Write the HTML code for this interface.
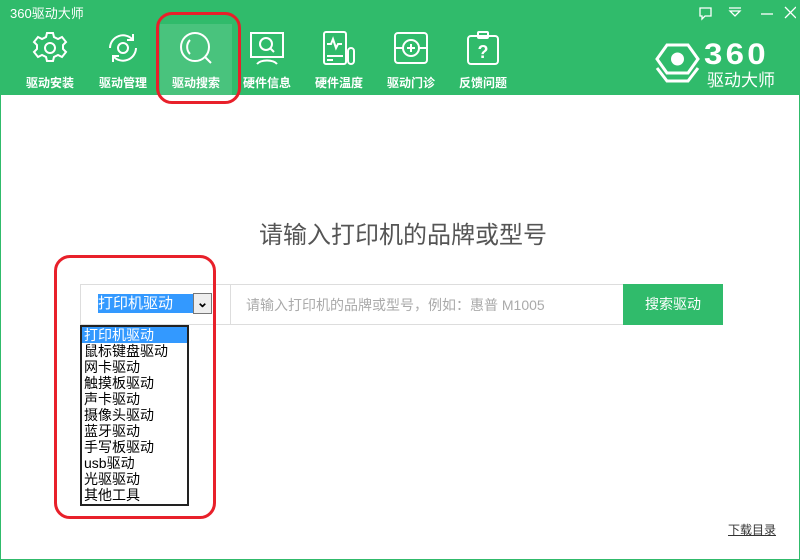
<!DOCTYPE html>
<html><head><meta charset="utf-8"><style>
*{margin:0;padding:0;box-sizing:border-box}
body{width:800px;height:560px;overflow:hidden;background:#fff;font-family:"Liberation Sans","Noto Sans CJK SC",sans-serif;position:relative}
.hdr{position:absolute;left:0;top:0;width:800px;height:95px;background:#30bb6b}
.ttl{position:absolute;left:10px;top:3px;color:#fff;font-size:13px}
.tab{position:absolute;top:24px;width:72px;height:71px;color:#fff;font-size:12px;text-align:center;font-weight:bold}
.tab svg{display:block;margin:6px auto 0}
.tab span{position:absolute;left:0;right:0;top:50px}
.on{background:rgba(255,255,255,.12)}
.abs{position:absolute}
.red{position:absolute;border:3.5px solid #e8202a;border-radius:16px}
.opt{height:16px;line-height:16px;font-size:14px;color:#000;padding-left:2px;white-space:nowrap}
</style></head><body>
<div class="hdr">
<div class="ttl">360驱动大师</div>
<svg class="abs" style="left:696px;top:5px" width="100" height="16" fill="none" stroke="#fff" stroke-width="1.3">
<path d="M4 3h11v8H9l-3 3v-3H4z"/><path d="M33 3h12M34 6h10l-5 5z"/><path d="M65 9h12"/><path d="M89 2l11 11M100 2L89 13"/></svg>
<div class="tab" style="left:14px"><svg width="36" height="36" viewBox="0 0 36 36" fill="none" stroke="#fff" stroke-width="2"><path d="M15 3h6l1 4 4 2 4-2 4 5-3 3v4l3 3-4 5-4-2-4 2-1 4h-6l-1-4-4-2-4 2-4-5 3-3v-4l-3-3 4-5 4 2 4-2z"/><circle cx="18" cy="18" r="5"/></svg><span>驱动安装</span></div>
<div class="tab" style="left:87px"><svg width="36" height="36" viewBox="0 0 36 36" fill="none" stroke="#fff" stroke-width="2"><path d="M5 18a13 13 0 0 1 23-8M31 18a13 13 0 0 1-23 8"/><path d="M28 4v6h-6M8 32v-6h6"/><circle cx="18" cy="18" r="5"/></svg><span>驱动管理</span></div>
<div class="tab on" style="left:160px"><svg width="36" height="36" viewBox="0 0 36 36" fill="none" stroke="#fff" stroke-width="2"><circle cx="17" cy="17" r="14"/><path d="M12 10a10 10 0 0 0 0 14M27 27l6 6"/></svg><span>驱动搜索</span></div>
<div class="tab" style="left:231px"><svg width="36" height="36" viewBox="0 0 36 36" fill="none" stroke="#fff" stroke-width="2"><rect x="2" y="3" width="32" height="24"/><circle cx="17" cy="14" r="6"/><path d="M21 18l4 4M8 34a11 6 0 0 1 20 0"/></svg><span>硬件信息</span></div>
<div class="tab" style="left:303px"><svg width="36" height="36" viewBox="0 0 36 36" fill="none" stroke="#fff" stroke-width="2"><rect x="3" y="2" width="22" height="32" rx="2"/><path d="M6 14h4l2-5 3 9 2-4h4M6 26h16M6 30h6"/><rect x="27" y="18" width="6" height="16" rx="3"/></svg><span>硬件温度</span></div>
<div class="tab" style="left:375px"><svg width="36" height="36" viewBox="0 0 36 36" fill="none" stroke="#fff" stroke-width="2"><rect x="2" y="3" width="32" height="30" rx="3"/><circle cx="18" cy="18" r="8"/><path d="M18 14v8M14 18h8M2 18h8M26 18h8"/></svg><span>驱动门诊</span></div>
<div class="tab" style="left:447px"><svg width="36" height="36" viewBox="0 0 36 36" fill="none" stroke="#fff" stroke-width="2"><rect x="3" y="6" width="30" height="28" rx="3"/><rect x="13" y="2" width="10" height="6" rx="1"/><text x="18" y="28" fill="#fff" stroke="none" font-size="18" text-anchor="middle" font-family="Liberation Sans">?</text></svg><span>反馈问题</span></div>
<svg class="abs" style="left:655px;top:42px" width="45" height="42" viewBox="0 0 45 42" fill="none" stroke="#fff" stroke-width="3"><path d="M12 3h21l10 14-10 14H12L2 17z"/><path d="M2 26l10 13h21l10-13"/><circle cx="22.5" cy="17" r="5" fill="#fff"/></svg>
<div class="abs" style="left:704px;top:38px;color:#fff;font-size:30px;font-weight:bold;letter-spacing:3px;transform:scaleX(1.1);transform-origin:left">360</div>
<div class="abs" style="left:707px;top:66px;color:#fff;font-size:17px">驱动大师</div>
</div>
<div class="abs" style="left:0;top:95px;width:800px;height:465px;border:1px solid #30bb6b;border-top:none"></div>
<div class="abs" style="left:0;top:215px;width:806px;text-align:center;font-size:24px;color:#555">请输入打印机的品牌或型号</div>
<div class="abs" style="left:80px;top:284px;width:544px;height:41px;border:1px solid #ddd"></div>
<div class="abs" style="left:230px;top:284px;width:1px;height:41px;background:#ddd"></div>
<div class="abs" style="left:98px;top:294px;width:95px;height:19px;background:#3399ff;color:#fff;font-size:15px;line-height:19px">打印机驱动</div>
<div class="abs" style="left:193px;top:293px;width:19px;height:21px;border:1px solid #777;background:#eee;font-size:14px;text-align:center;line-height:16px;font-weight:bold">&#8964;</div>
<div class="abs" style="left:246px;top:295px;font-size:14px;color:#aaa">请输入打印机的品牌或型号，例如：惠普 M1005</div>
<div class="abs" style="left:623px;top:284px;width:100px;height:41px;background:#30bb6b;color:#fff;font-size:14px;text-align:center;line-height:41px">搜索驱动</div>
<div class="abs" style="left:80px;top:325px;width:109px;height:181px;border:2px solid #222;background:#fff;padding-top:0">
<div class="opt" style="background:#3399ff;color:#fff">打印机驱动</div>
<div class="opt">鼠标键盘驱动</div><div class="opt">网卡驱动</div><div class="opt">触摸板驱动</div><div class="opt">声卡驱动</div><div class="opt">摄像头驱动</div><div class="opt">蓝牙驱动</div><div class="opt">手写板驱动</div><div class="opt">usb驱动</div><div class="opt">光驱驱动</div><div class="opt">其他工具</div>
</div>
<div class="abs" style="left:728px;top:521px;font-size:12px;color:#333;text-decoration:underline">下载目录</div>
<div class="red" style="left:156px;top:12px;width:85px;height:92px"></div>
<div class="red" style="left:54px;top:255px;width:162px;height:264px"></div>
</body></html>
